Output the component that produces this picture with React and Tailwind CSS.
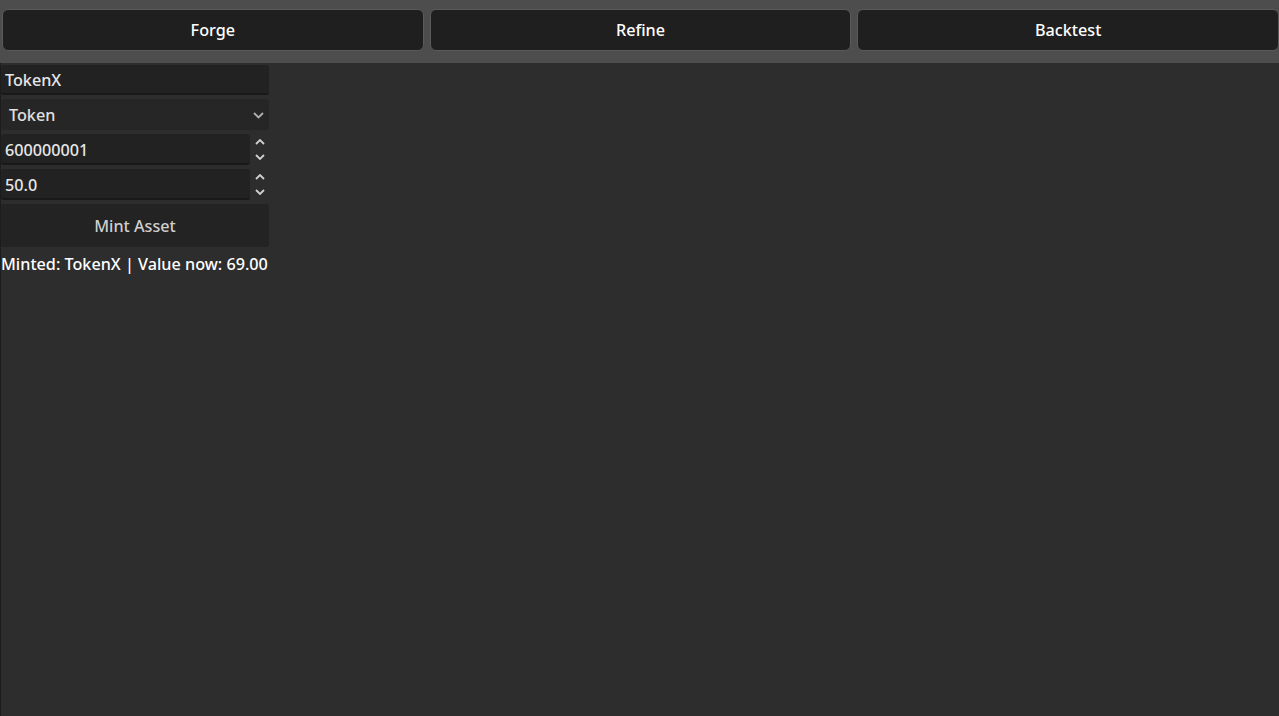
import React from 'react';

const font = { fontFamily: '"Noto Sans", "Open Sans", sans-serif' };

const Spin = () => (
  <div className="flex w-[19px] flex-col items-center justify-center gap-[9px]">
    <svg width="10" height="6" viewBox="0 0 10 6">
      <path d="M1 5 L5 1 L9 5" fill="none" stroke="#d0d0d0" strokeWidth="1.8" />
    </svg>
    <svg width="10" height="6" viewBox="0 0 10 6">
      <path d="M1 1 L5 5 L9 1" fill="none" stroke="#d0d0d0" strokeWidth="1.8" />
    </svg>
  </div>
);

const App = () => {
  return (
    <div className="flex h-[716px] w-[1279px] flex-col bg-[#2d2d2d] text-[16.2px] font-medium" style={font}>
      {/* top tabs */}
      <div className="flex h-[63px] gap-[6px] bg-[#4d4d4d] pl-[2px] pt-[9px]">
        {['Forge', 'Refine', 'Backtest'].map((t) => (
          <button
            key={t}
            className="flex h-[42px] flex-1 items-center justify-center rounded-[6px] border border-[#5a5a5a] bg-[#1f1f1f] font-medium text-white"
          >
            {t}
          </button>
        ))}
      </div>

      {/* body */}
      <div className="flex flex-1 border-l border-[#1c1c1c]">
        <div className="flex w-[268px] flex-col gap-[4px] pt-[2px]">
          <div className="flex h-[30px] items-center rounded-[3px] border-b-2 border-[#191919] bg-[#222222] pl-[4px] pt-[2px] text-[#e6e6e6]">
            TokenX
          </div>
          <div className="flex h-[31px] items-center justify-between rounded-[3px] bg-[#262626] pl-[8px] pr-[5px] pt-[2px] text-[#e0e0e0]">
            <span>Token</span>
            <svg width="11" height="7" viewBox="0 0 11 7">
              <path d="M1 1 L5.5 5.5 L10 1" fill="none" stroke="#b0b0b0" strokeWidth="1.8" />
            </svg>
          </div>
          <div className="flex h-[31px]">
            <div className="flex w-[249px] items-center rounded-[3px] border-b-2 border-[#191919] bg-[#222222] pl-[4px] pt-[4px] text-[#e6e6e6]">
              600000001
            </div>
            <Spin />
          </div>
          <div className="flex h-[31px]">
            <div className="flex w-[249px] items-center rounded-[3px] border-b-2 border-[#191919] bg-[#222222] pl-[4px] pt-[4px] text-[#e6e6e6]">
              50.0
            </div>
            <Spin />
          </div>
          <button className="flex h-[43px] items-center justify-center rounded-[3px] bg-[#232323] pt-[2px] font-medium text-[#cfcfcf]">
            Mint Asset
          </button>
          <div className="mt-[1px] whitespace-nowrap text-white">Minted: TokenX | Value now: 69.00</div>
        </div>
      </div>
    </div>
  );
};

export default App;
